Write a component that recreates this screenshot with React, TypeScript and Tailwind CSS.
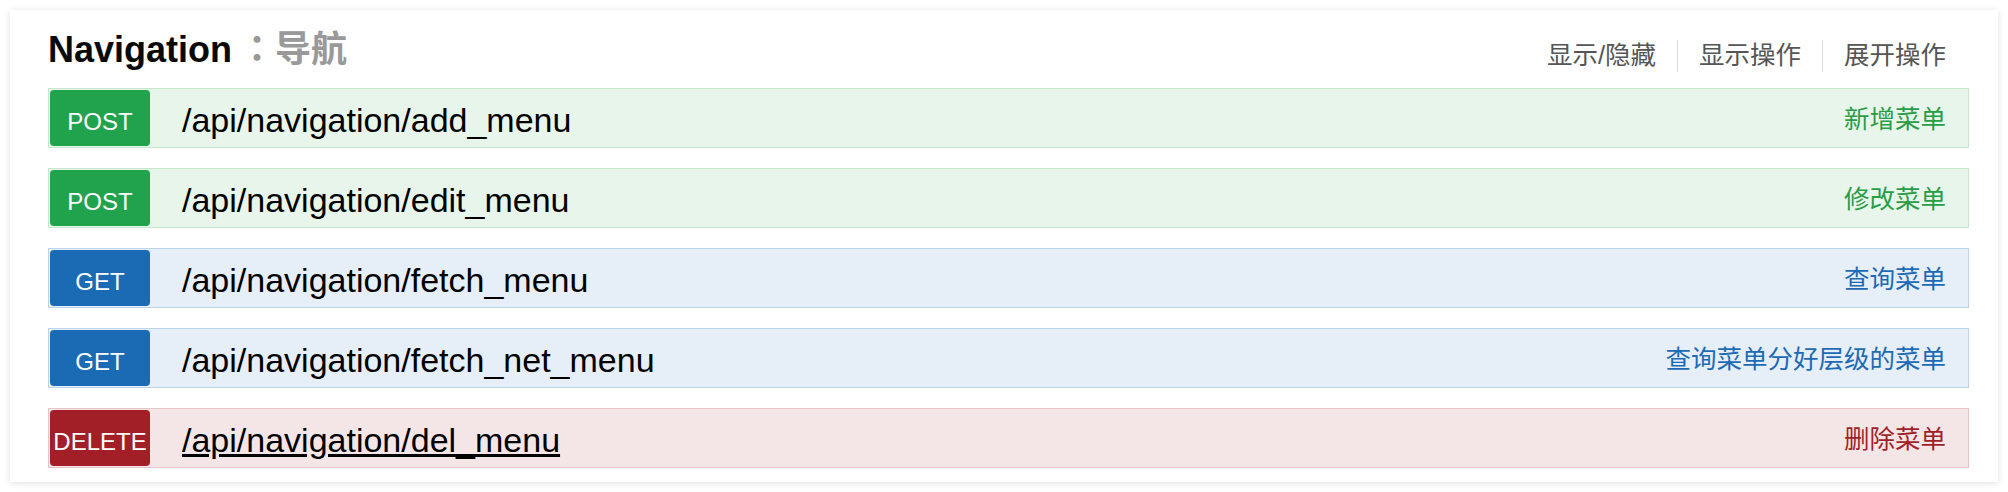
import React from 'react';

type Method = 'POST' | 'GET' | 'DELETE';

const endpoints: { method: Method; path: string; summary: string; hover?: boolean }[] = [
  { method: 'POST', path: '/api/navigation/add_menu', summary: '新增菜单' },
  { method: 'POST', path: '/api/navigation/edit_menu', summary: '修改菜单' },
  { method: 'GET', path: '/api/navigation/fetch_menu', summary: '查询菜单' },
  { method: 'GET', path: '/api/navigation/fetch_net_menu', summary: '查询菜单分好层级的菜单' },
  { method: 'DELETE', path: '/api/navigation/del_menu', summary: '删除菜单', hover: true },
];

const theme: Record<Method, { row: string; badge: string; text: string }> = {
  POST: { row: 'bg-[#e8f5ea] border-[#c4e7cd]', badge: 'bg-[#21a34e]', text: 'text-[#2a9d47]' },
  GET: { row: 'bg-[#e6eef7] border-[#bdd4ea]', badge: 'bg-[#1b6bb4]', text: 'text-[#1d6ab6]' },
  DELETE: { row: 'bg-[#f4e6e7] border-[#e7c4c6]', badge: 'bg-[#a31f28]', text: 'text-[#a11f28]' },
};

const links = ['显示/隐藏', '显示操作', '展开操作'];

const App: React.FC = () => {
  return (
    <div className="bg-white p-[10px] font-['Liberation_Sans','Noto_Sans_CJK_SC',sans-serif]">
      <div className="bg-white shadow-[0_1px_7px_rgba(0,0,0,0.13)] pt-[22px] pb-[14px] pl-[38px] pr-[29px]">
        <div className="flex items-end justify-between mb-[20px]">
          <h2 className="text-[36px] leading-none font-bold text-[#0a0a0a]">
            Navigation
            <span className="pl-[7px] text-[#999] font-['Liberation_Sans','Noto_Sans_CJK_TC',sans-serif]">：</span>
            <span className="text-[#999]">导航</span>
          </h2>
          <div className="flex items-center mr-[2px] mb-[-4px] text-[25.5px] text-[#555]">
            {links.map((l, i) => (
              <div
                key={l}
                className={`h-[32px] flex items-center px-[21px] leading-none ${i > 0 ? 'border-l border-[#dcdcdc]' : ''}`}
              >
                {l}
              </div>
            ))}
          </div>
        </div>

        <div className="flex flex-col gap-[20px]">
          {endpoints.map((e) => {
            const t = theme[e.method];
            return (
              <div key={e.path} className={`flex items-center h-[60px] border p-px ${t.row}`}>
                <div
                  className={`w-[100px] h-[56px] rounded-[4px] flex items-center justify-center pt-[8px] text-white text-[24px] leading-none ${t.badge}`}
                >
                  {e.method}
                </div>
                <div
                  className={`ml-[32px] pt-[3px] text-[34px] leading-none text-black ${e.hover ? 'underline' : ''}`}
                >
                  {e.path}
                </div>
                <div className={`ml-auto pr-[21px] pt-[4px] text-[25.5px] leading-none ${t.text}`}>{e.summary}</div>
              </div>
            );
          })}
        </div>
      </div>
    </div>
  );
};

export default App;
